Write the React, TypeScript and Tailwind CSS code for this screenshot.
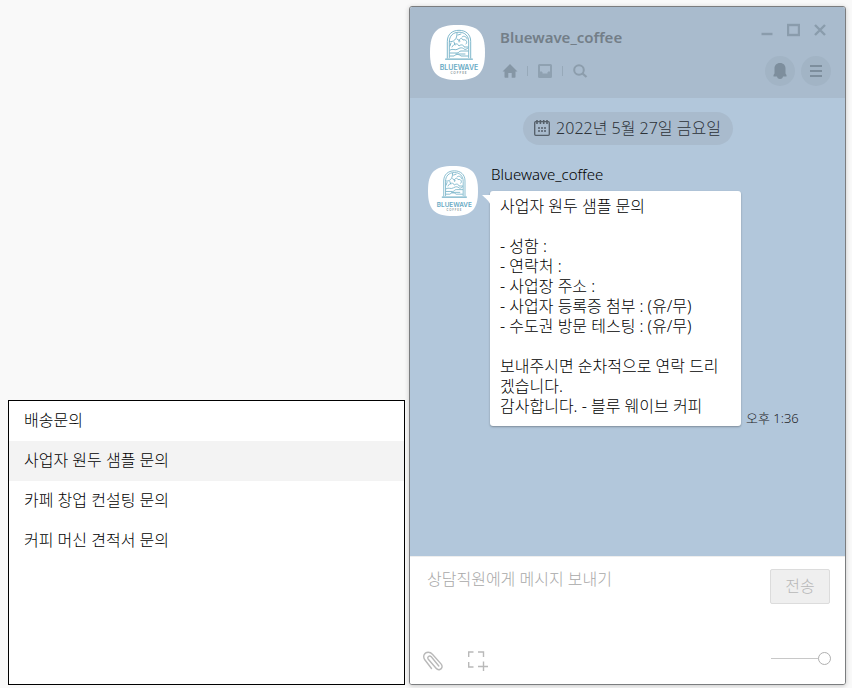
import React from "react";

const QUICK_REPLIES = ["배송문의", "사업자 원두 샘플 문의", "카페 창업 컨설팅 문의", "커피 머신 견적서 문의"];

const MESSAGE = `사업자 원두 샘플 문의

- 성함 :
- 연락처 :
- 사업장 주소 :
- 사업자 등록증 첨부 : (유/무)
- 수도권 방문 테스팅 : (유/무)

보내주시면 순차적으로 연락 드리겠습니다.
감사합니다. - 블루 웨이브 커피`;

function Logo({ className }: { className: string }) {
  return (
    <svg viewBox="0 0 55 55" className={className} role="img" aria-label="Bluewave Coffee">
      <path d="M27.5 0C48 0 55 7 55 27.5S48 55 27.5 55 0 48 0 27.5 7 0 27.5 0Z" fill="#fff" />
      <g fill="none" stroke="#72b0c6" strokeWidth="0.9" strokeLinecap="round">
        <path d="M17.3 33V16.500C17.300 9.500 22 5.300 29 5.300S40.700 9.500 40.700 16.500V33" />
        <path d="M19.300 32.500V17C19.300 11 23 7.200 29 7.200S38.700 11 38.700 17V32.500" />
        <path d="M15.700 34.200H42.300" strokeWidth="1.300" />
        <path d="M19.500 16.500C23 17.500 27.500 14.500 27 8M21 18l-1 3M24 17l1 3M27 14l3 2M28 10l3-1" />
        <path d="M29 17c-1-3 3-5 4-2 3-1 5 2 3 4M32 12c2-2 5 0 5 2M22 22c2-4 6-4 7-1 2-2 5-1 5 1h4" />
        <path d="M20 25c3-2 5 1 8-1s5-1 6 0 3 0 4-1M20 28h7c2 0 2-2 4-2h7M20 31h4c2-2 5-2 7 0h7M26 29h9" />
      </g>
      <text x="29" y="44.800" textAnchor="middle" fontFamily="Inter, sans-serif" fontWeight="600" fontSize="7" fill="#68aac4">BLUEWAVE</text>
      <text x="29" y="49" textAnchor="middle" fontFamily="Lato, sans-serif" fontWeight="700" fontSize="3" letterSpacing="1" fill="#8b979c">COFFEE</text>
    </svg>
  );
}

function HomeIcon() {
  return (
    <svg width="16" height="16" viewBox="0 0 16 16" fill="#8596a5" aria-hidden="true">
      <path d="M8 1 .5 8.500h2V14a.8.8 0 0 0 .8.800h3V10h3.400v4.800h3a.8.8 0 0 0 .8-.8V8.500h2Z" />
    </svg>
  );
}

function InboxIcon() {
  return (
    <svg width="16" height="16" viewBox="0 0 16 16" fill="none" stroke="#8fa1b1" strokeWidth="2" aria-hidden="true">
      <rect x="2" y="2" width="12" height="12" rx="0.500" />
      <path d="M2 9h3v2h6V9h3v5H2Z" fill="#8fa1b1" strokeWidth="1" />
    </svg>
  );
}

function SearchIcon() {
  return (
    <svg width="16" height="16" viewBox="0 0 16 16" fill="none" stroke="#8c9dac" strokeWidth="2" aria-hidden="true">
      <circle cx="7" cy="7" r="4.800" />
      <path d="m10.500 10.500 4 3.500" strokeWidth="2.300" />
    </svg>
  );
}

function BellIcon() {
  return (
    <svg width="16" height="18" viewBox="0 0 16 18" fill="#7d8e9d" aria-hidden="true">
      <path d="M8 1c3.500 0 5.500 2.400 5.500 5.500v5l1 1.500v1.500h-13V13l1-1.500v-5C2.500 3.400 4.500 1 8 1Z" />
      <path d="M5 14h6c0 1.800-1.200 3-3 3s-3-1.200-3-3Z" />
    </svg>
  );
}

function CalendarIcon() {
  return (
    <svg width="16" height="18" viewBox="0 0 16 18" fill="none" stroke="#555f69" strokeWidth="1.300" aria-hidden="true">
      <rect x="0.700" y="2.700" width="14.600" height="13.600" rx="1" />
      <path d="M3 1v4M6.400 1v4M9.700 1v4M13 1v4" strokeWidth="1.600" />
      <path d="M4 9h2M7 9h2M10 9h2M4 12h2M7 12h2M10 12h2" strokeWidth="1.500" />
    </svg>
  );
}

function ClipIcon() {
  return (
    <svg width="20" height="20" viewBox="0 0 20 20" fill="none" stroke="#b9b9b9" strokeWidth="1.400" strokeLinecap="round" aria-hidden="true">
      <path d="M8.500 17.500 1.800 8.800C-.5 5.500 1.200 1.200 5.200 1.200c1.800 0 3.100.7 4.200 2l8.800 9.900c1.500 1.900 1 4.700-1.300 5.400-1.500.5-2.800 0-3.800-1.200L5.300 8.200C3.800 6.300 6.300 3.700 8.300 5.700l7.500 9.300" />
    </svg>
  );
}

function CaptureIcon() {
  return (
    <svg width="22" height="20" viewBox="0 0 22 20" fill="none" stroke="#b9b9b9" strokeWidth="1.400" aria-hidden="true">
      <path d="M6.500 1H1.700v5M11 1h5.500v5M1.700 11v5h4.800M16.500 10.500v9.500M11 15.500h10" />
    </svg>
  );
}

export default function App() {
  return (
    <main className="flex min-h-screen items-end gap-1 bg-[#f9f9f9] pt-1.5 pr-1.5 pb-[3px] pl-2 font-['Noto_Sans','Noto_Sans_CJK_KR',sans-serif] text-base font-light text-black">
      <ul className="min-h-[285px] flex-1 border border-black bg-white">
        {QUICK_REPLIES.map((label, i) => (
          <li key={label}>
            <button type="button" className={`block h-10 w-full px-[15px] pb-0.5 text-left ${i === 1 ? "bg-[#f3f3f3]" : "bg-white"}`}>
              {label}
            </button>
          </li>
        ))}
      </ul>

      <section className="flex w-[437px] flex-col self-stretch rounded-[3px] border border-[#7b7d7f] bg-white shadow-[0_1px_5px_rgba(0,0,0,0.2)]">
        <header className="flex items-start rounded-t-[2px] bg-[#a9bbcd] pt-4 pr-3.5 pb-3 pl-5">
          <Logo className="mt-0.5 size-[55px] shrink-0" />
          <div className="mt-0.5 ml-[15px] flex flex-1 flex-col gap-3.5">
            <h1 className="text-[15px] leading-6 font-semibold text-[#737e88]">Bluewave_coffee</h1>
            <nav className="ml-0.5 flex items-center gap-[9px]">
              <button type="button" aria-label="홈"><HomeIcon /></button>
              <span className="h-2.5 w-px bg-[#97a9b9]" />
              <button type="button" aria-label="보관함"><InboxIcon /></button>
              <span className="h-2.5 w-px bg-[#97a9b9]" />
              <button type="button" aria-label="검색"><SearchIcon /></button>
            </nav>
          </div>
          <div className="flex flex-col items-end gap-[19px]">
            <div className="flex h-3.5 items-center gap-3.5 pr-[5px]">
              <button type="button" aria-label="최소화">
                <svg width="12" height="14" viewBox="0 0 12 14" className="block" aria-hidden="true"><path d="M0.500 11h11" stroke="#8a9cac" strokeWidth="2.400" /></svg>
              </button>
              <button type="button" aria-label="최대화">
                <svg width="13" height="14" viewBox="0 0 13 14" className="block" aria-hidden="true"><rect x="1" y="2" width="11" height="10" fill="none" stroke="#8a9cac" strokeWidth="2.400" /></svg>
              </button>
              <button type="button" aria-label="닫기">
                <svg width="12" height="14" viewBox="0 0 12 14" className="block" aria-hidden="true"><path d="m1 2 10 10M11 2 1 12" stroke="#8a9cac" strokeWidth="2.400" /></svg>
              </button>
            </div>
            <div className="flex gap-1.5">
              <button type="button" aria-label="알림" className="flex size-[30px] items-center justify-center rounded-full bg-[#a2b4c5]"><BellIcon /></button>
              <button type="button" aria-label="메뉴" className="flex size-[30px] items-center justify-center rounded-full bg-[#a2b4c5]">
                <svg width="14" height="14" viewBox="0 0 14 14" aria-hidden="true"><path d="M1 2h12M1 7h12M1 12h12" stroke="#7d8e9d" strokeWidth="2" /></svg>
              </button>
            </div>
          </div>
        </header>

        <div className="flex-1 bg-[#b2c7db] px-[18px] pt-3.5 pb-16">
          <div className="mx-auto flex h-[33px] w-[210px] items-center justify-center gap-1.5 rounded-full bg-[#a9bbcd] pb-0.5 text-[#2c3238]">
            <CalendarIcon />
            <time dateTime="2022-05-27" className="whitespace-nowrap">2022년 5월 27일 금요일</time>
          </div>
          <article className="mt-[21px] flex items-start">
            <Logo className="size-[50px] shrink-0" />
            <div className="ml-3">
              <h2 className="pl-px text-[15px] leading-4">Bluewave_coffee</h2>
              <div className="mt-[9px] flex items-end gap-[5px]">
                <div className="relative w-[251px] rounded-[3px] bg-white px-2.5 pt-[5px] pb-2.5 shadow-[0_1px_2px_rgba(0,0,0,0.3)]">
                  <svg width="9" height="11" viewBox="0 0 9 11" className="absolute top-1 -left-2" aria-hidden="true">
                    <path d="M0 0h9v11C7 5 3 3 0 0Z" fill="#fff" />
                  </svg>
                  <p className="leading-5 break-all whitespace-pre-wrap">{MESSAGE}</p>
                </div>
                <time className="text-[13px] leading-4 whitespace-nowrap text-[#1f2428]">오후 1:36</time>
              </div>
            </div>
          </article>
        </div>

        <form className="flex h-32 flex-col justify-between rounded-b-[2px] border-t border-[#eee] bg-white pt-3 pr-3.5 pb-[13px] pl-[13px]">
          <div className="flex items-start pr-px">
            <textarea
              aria-label="메시지"
              placeholder="상담직원에게 메시지 보내기"
              className="block h-12 flex-1 resize-none bg-transparent pl-1 leading-5 outline-none placeholder:text-[#a8a8a8]"
            />
            <button type="button" className="h-[35px] w-[60px] rounded-[2px] border border-[#dcdcdc] bg-[#efefef] pb-0.5 text-[#b8b8b8]">전송</button>
          </div>
          <div className="flex h-5 items-start">
            <button type="button" aria-label="파일 첨부"><ClipIcon /></button>
            <button type="button" aria-label="화면 캡처" className="ml-6"><CaptureIcon /></button>
            <input
              type="range"
              aria-label="투명도"
              defaultValue={100}
              className="ml-auto h-[15px] w-[60px] appearance-none bg-[linear-gradient(#c8c8c8,#c8c8c8)] bg-[length:100%_1px] bg-center bg-no-repeat [&::-webkit-slider-thumb]:size-[13px] [&::-webkit-slider-thumb]:appearance-none [&::-webkit-slider-thumb]:rounded-full [&::-webkit-slider-thumb]:border [&::-webkit-slider-thumb]:border-solid [&::-webkit-slider-thumb]:border-[#b0b0b0] [&::-webkit-slider-thumb]:bg-white"
            />
          </div>
        </form>
      </section>
    </main>
  );
}
